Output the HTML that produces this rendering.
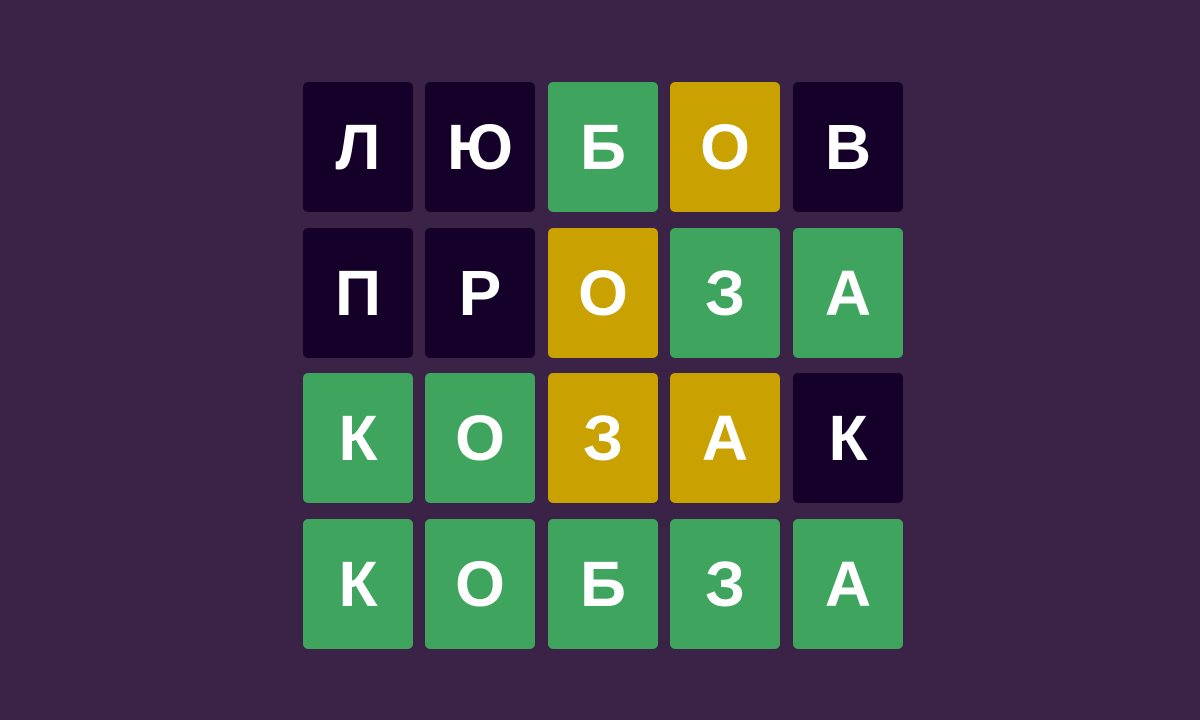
<!DOCTYPE html>
<html><head><meta charset="utf-8"><style>
html,body{margin:0;padding:0;width:1200px;height:720px;background:#3a2346;overflow:hidden}
.t{position:absolute;width:110px;height:130px;border-radius:5px;color:#fff;font:bold 64px/130px "Liberation Sans","DejaVu Sans",sans-serif;text-align:center}
.d{background:#150029}.g{background:#3fa55e}.y{background:#c9a100}
</style></head><body>
<div class="t d" style="left:303px;top:82px">Л</div>
<div class="t d" style="left:425px;top:82px">Ю</div>
<div class="t g" style="left:548px;top:82px">Б</div>
<div class="t y" style="left:670px;top:82px">О</div>
<div class="t d" style="left:793px;top:82px">В</div>
<div class="t d" style="left:303px;top:228px">П</div>
<div class="t d" style="left:425px;top:228px">Р</div>
<div class="t y" style="left:548px;top:228px">О</div>
<div class="t g" style="left:670px;top:228px">З</div>
<div class="t g" style="left:793px;top:228px">А</div>
<div class="t g" style="left:303px;top:373px">К</div>
<div class="t g" style="left:425px;top:373px">О</div>
<div class="t y" style="left:548px;top:373px">З</div>
<div class="t y" style="left:670px;top:373px">А</div>
<div class="t d" style="left:793px;top:373px">К</div>
<div class="t g" style="left:303px;top:519px">К</div>
<div class="t g" style="left:425px;top:519px">О</div>
<div class="t g" style="left:548px;top:519px">Б</div>
<div class="t g" style="left:670px;top:519px">З</div>
<div class="t g" style="left:793px;top:519px">А</div>
</body></html>
